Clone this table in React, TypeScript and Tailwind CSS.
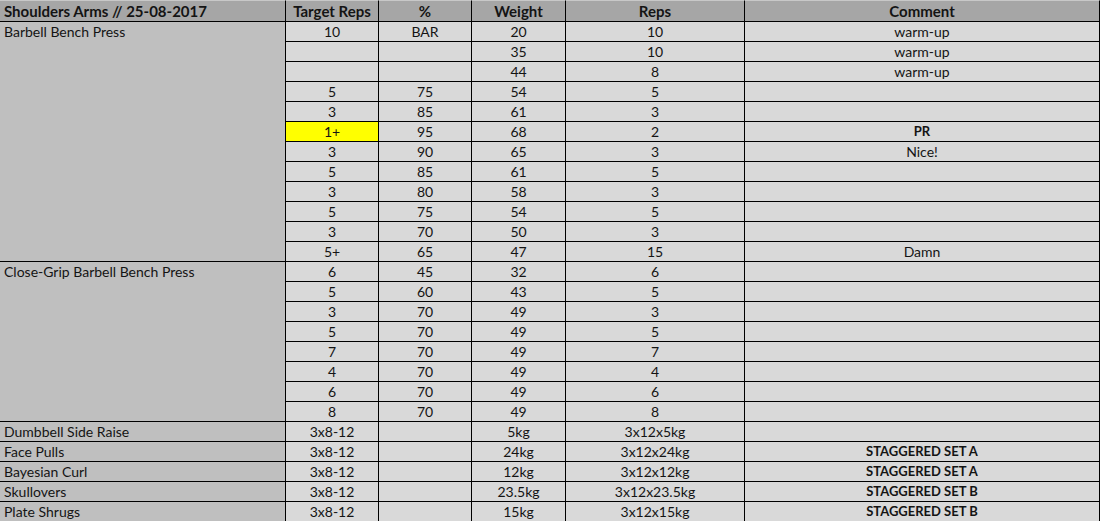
import * as React from 'react';

type SetRow = {
  target: string;
  pct: string;
  weight: string;
  reps: string;
  comment?: string;
  bold?: boolean;
  highlight?: boolean;
};

type Exercise = {
  name: string;
  sets: SetRow[];
};

const r = (target: string, pct: string, weight: string, reps: string, comment = ''): SetRow => ({
  target,
  pct,
  weight,
  reps,
  comment,
});

const exercises: Exercise[] = [
  {
    name: 'Barbell Bench Press',
    sets: [
      r('10', 'BAR', '20', '10', 'warm-up'),
      r('', '', '35', '10', 'warm-up'),
      r('', '', '44', '8', 'warm-up'),
      r('5', '75', '54', '5'),
      r('3', '85', '61', '3'),
      { ...r('1+', '95', '68', '2', 'PR'), bold: true, highlight: true },
      r('3', '90', '65', '3', 'Nice!'),
      r('5', '85', '61', '5'),
      r('3', '80', '58', '3'),
      r('5', '75', '54', '5'),
      r('3', '70', '50', '3'),
      r('5+', '65', '47', '15', 'Damn'),
    ],
  },
  {
    name: 'Close-Grip Barbell Bench Press',
    sets: [
      r('6', '45', '32', '6'),
      r('5', '60', '43', '5'),
      r('3', '70', '49', '3'),
      r('5', '70', '49', '5'),
      r('7', '70', '49', '7'),
      r('4', '70', '49', '4'),
      r('6', '70', '49', '6'),
      r('8', '70', '49', '8'),
    ],
  },
  { name: 'Dumbbell Side Raise', sets: [r('3x8-12', '', '5kg', '3x12x5kg')] },
  { name: 'Face Pulls', sets: [{ ...r('3x8-12', '', '24kg', '3x12x24kg', 'STAGGERED SET A'), bold: true }] },
  { name: 'Bayesian Curl', sets: [{ ...r('3x8-12', '', '12kg', '3x12x12kg', 'STAGGERED SET A'), bold: true }] },
  { name: 'Skullovers', sets: [{ ...r('3x8-12', '', '23.5kg', '3x12x23.5kg', 'STAGGERED SET B'), bold: true }] },
  { name: 'Plate Shrugs', sets: [{ ...r('3x8-12', '', '15kg', '3x12x15kg', 'STAGGERED SET B'), bold: true }] },
];

const cell = 'border-r border-b border-black bg-[#d9d9d9] text-center align-middle p-0 leading-[19px]';
const head =
  'border-r border-b border-t border-black border-t-[#c8c8c8] bg-[#a6a6a6] text-center align-middle p-0 font-bold text-[15px] leading-[20px]';

export default function App() {
  return (
    <div className="w-[1100px] h-[521px] bg-white overflow-hidden">
      <table
        className="table-fixed border-separate border-spacing-0 w-[1100px] text-[14px] text-[#141414]"
        style={{ fontFamily: 'Lato, "Open Sans", sans-serif' }}
      >
        <colgroup>
          <col className="w-[286px]" />
          <col className="w-[93px]" />
          <col className="w-[93px]" />
          <col className="w-[94px]" />
          <col className="w-[179px]" />
          <col className="w-[355px]" />
        </colgroup>
        <thead>
          <tr className="h-[21px]">
            <th className={`${head} text-left pl-[4px]`}>Shoulders Arms // 25-08-2017</th>
            <th className={head}>Target Reps</th>
            <th className={head}>%</th>
            <th className={head}>Weight</th>
            <th className={head}>Reps</th>
            <th className={head}>Comment</th>
          </tr>
        </thead>
        <tbody>
          {exercises.map((ex) =>
            ex.sets.map((s, i) => (
              <tr key={ex.name + i} className="h-[20px]">
                {i === 0 && (
                  <td
                    rowSpan={ex.sets.length}
                    className="border-r border-b border-black bg-[#bfbfbf] text-left align-top p-0 pl-[4px] leading-[19px]"
                  >
                    {ex.name}
                  </td>
                )}
                <td className={s.highlight ? `${cell} !bg-[#ffff00]` : cell}>{s.target}</td>
                <td className={cell}>{s.pct}</td>
                <td className={cell}>{s.weight}</td>
                <td className={cell}>{s.reps}</td>
                <td className={s.bold ? `${cell} font-bold text-[13px]` : cell}>{s.comment}</td>
              </tr>
            ))
          )}
        </tbody>
      </table>
    </div>
  );
}
